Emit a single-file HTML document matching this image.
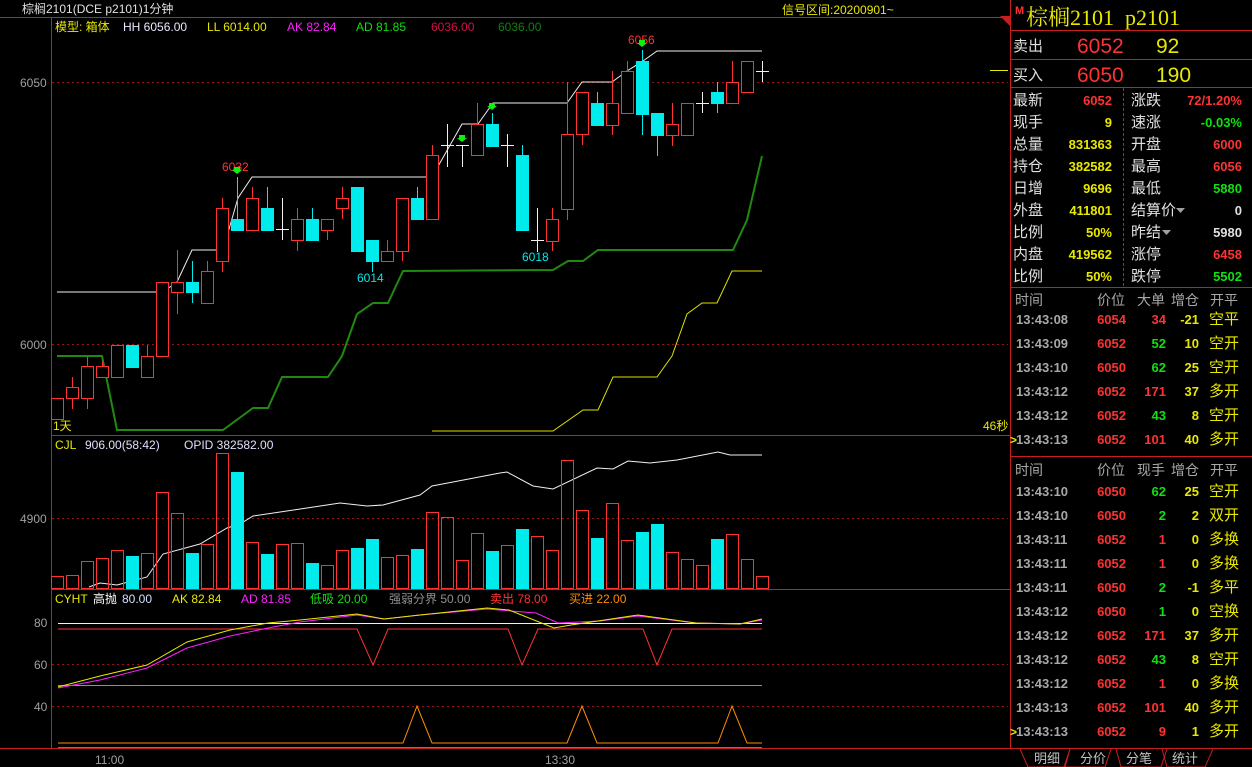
<!DOCTYPE html>
<html><head><meta charset="utf-8"><style>
html,body{margin:0;padding:0;background:#000;width:1252px;height:767px;overflow:hidden}
svg{display:block}
</style></head><body>
<svg id="s" width="1252" height="767" xmlns="http://www.w3.org/2000/svg" font-family="Liberation Sans, Noto Sans CJK SC, sans-serif" font-size="12">
<rect width="1252" height="767" fill="#000"/>
<g stroke="#c81e1e">
<line x1="0" y1="17.5" x2="1010" y2="17.5"/>
<line x1="51.5" y1="17" x2="51.5" y2="749"/>
<line x1="51" y1="435.5" x2="1010" y2="435.5"/>
<line x1="51" y1="589.5" x2="1010" y2="589.5"/>
<line x1="0" y1="748.5" x2="1252" y2="748.5"/>
<line x1="1010.5" y1="0" x2="1010.5" y2="749"/>
</g>
<g stroke="#a01010" stroke-dasharray="2,3">
<line x1="52" y1="82.5" x2="1008" y2="82.5"/>
<line x1="52" y1="344.5" x2="1008" y2="344.5"/>
<line x1="52" y1="518.5" x2="1008" y2="518.5"/>
<line x1="52" y1="664.5" x2="1008" y2="664.5"/>
<line x1="52" y1="706.5" x2="1008" y2="706.5"/>
</g>
<g fill="#a0a0a0" font-size="12">
<text x="20" y="87">6050</text>
<text x="20" y="349">6000</text>
<text x="20" y="523">4900</text>
<text x="34" y="627">80</text>
<text x="34" y="669">60</text>
<text x="34" y="711">40</text>
<text x="95" y="764">11:00</text>
<text x="545" y="764">13:30</text>
</g>
<text x="22" y="13" fill="#e0e0e0">棕榈2101(DCE p2101)1分钟</text>
<text x="782" y="14" fill="#e8e800">信号区间:20200901~</text>
<text x="55" y="31" fill="#e8e800">模型: 箱体</text>
<text x="123" y="31" fill="#e8e8ff">HH 6056.00</text>
<text x="207" y="31" fill="#e8e800">LL 6014.00</text>
<text x="287" y="31" fill="#ff20ff">AK 82.84</text>
<text x="356" y="31" fill="#10e010">AD 81.85</text>
<text x="431" y="31" fill="#d0104a">6036.00</text>
<text x="498" y="31" fill="#108010">6036.00</text>
<text x="53" y="430" fill="#e8e800">1天</text>
<text x="983" y="430" fill="#e8e800">46秒</text>
<line x1="990" y1="70.5" x2="1008" y2="70.5" stroke="#e8e800"/>
<text x="55" y="449" fill="#e8e800">CJL</text>
<text x="85" y="449" fill="#e0e0ff">906.00(58:42)</text>
<text x="184" y="449" fill="#e0e0ff">OPID 382582.00</text>
<text x="55" y="603" fill="#e8e800">CYHT</text>
<text x="93" y="603" fill="#fff">高抛</text><text x="122" y="603" fill="#d0e0ff">80.00</text>
<text x="172" y="603" fill="#e8e800">AK 82.84</text>
<text x="241" y="603" fill="#ff20ff">AD 81.85</text>
<text x="310" y="603" fill="#10e010">低吸 20.00</text>
<text x="389" y="603" fill="#909090">强弱分界 50.00</text>
<text x="490" y="603" fill="#ff3232">卖出 78.00</text>
<text x="569" y="603" fill="#ff8c00">买进 22.00</text>
<polyline fill="none" stroke="#f0f0f0" points="57,292 163,292 177,282 192,250 223,250 238,198 252,177 432,177 462,124 478,124 493,103 567,103 582,82 612,82 627,71 643,61 657,51 762,51"/>
<polyline fill="none" stroke="#208a10" stroke-width="2" points="57,356 102,356 117,430 223,430 253,408 268,408 282,377 328,377 342,356 357,314 373,303 388,303 403,271 553,270 568,261 583,261 598,250 733,250 747,220 762,156"/>
<polyline fill="none" stroke="#e0e000" points="432,431 553,431 583,410 598,410 613,377 657,377 672,356 687,314 702,303 717,303 732,271 762,271"/>
<polyline fill="none" stroke="#f0f0f0" points="89,587 100,583 117,585 147,577 163,554 200,544 227,528 240,524 253,516 307,508 340,503 367,506 383,505 420,495 432,486 453,482 500,473 507,472 533,486 553,489 597,468 613,469 628,461 650,463 677,460 718,452 730,455 762,455"/>
<line x1="58" y1="623.5" x2="762" y2="623.5" stroke="#f0f0f0"/>
<line x1="58" y1="685.5" x2="762" y2="685.5" stroke="#909090"/>
<line x1="58" y1="747.5" x2="762" y2="747.5" stroke="#10c010"/>
<polyline fill="none" stroke="#ff3232" points="58,629 357,629 373,665 388,629 508,629 522,665 538,629 643,629 657,665 672,629 762,629"/>
<polyline fill="none" stroke="#ff8c00" points="58,743 403,743 417,706 432,743 567,743 582,706 597,743 718,743 732,706 747,743 762,743"/>
<polyline fill="none" stroke="#ff20ff" points="58,688 100,680 147,668 187,648 230,636 268,628 300,622 357,615 384,619 420,615 487,609 536,613 558,623 600,621 638,616 696,623 740,624 762,620"/>
<polyline fill="none" stroke="#e8e800" points="58,687 100,676 147,665 187,642 230,630 268,623 300,620 357,614 384,619 420,615 487,608 509,610 554,628 571,625 638,615 696,623 740,624 762,619"/>
<g id="cd"></g>
<text x="222" y="171" fill="#ff3232">6032</text>
<text x="357" y="282" fill="#00e8e8">6014</text>
<text x="522" y="261" fill="#00e8e8">6018</text>
<text x="628" y="44" fill="#ff3232">6056</text>
<g fill="#10f010">
<path d="M234,167h6v3h2l-5,4l-5,-4h2z"/>
<path d="M459,135h6v3h2l-5,4l-5,-4h2z"/>
<path d="M489,103h6v3h2l-5,4l-5,-4h2z"/>
<path d="M639,40h6v3h2l-5,4l-5,-4h2z"/>
</g>
<path d="M1000,16h10v10z" fill="#c81e1e"/>
<text x="1015" y="14" fill="#ff3232" font-size="11" font-weight="bold">M</text>
<text x="1026" y="25" fill="#e8e800" font-size="22" font-family="Liberation Serif, Noto Serif CJK SC, serif">棕榈2101&#160;&#160;p2101</text>
<g stroke="#c81e1e">
<line x1="1010" y1="30.5" x2="1252" y2="30.5"/>
<line x1="1010" y1="59.5" x2="1252" y2="59.5"/>
<line x1="1010" y1="87.5" x2="1252" y2="87.5"/>
<line x1="1010" y1="287.5" x2="1252" y2="287.5"/>
<line x1="1010" y1="456.5" x2="1252" y2="456.5"/>
<line x1="1123.5" y1="88" x2="1123.5" y2="287" stroke-dasharray="3,2"/>
</g>
<text x="1013" y="51" fill="#e0e0e0" font-size="15">卖出</text>
<text x="1077" y="53" fill="#ff3232" font-size="21">6052</text>
<text x="1156" y="53" fill="#e8e800" font-size="21">92</text>
<text x="1013" y="80" fill="#e0e0e0" font-size="15">买入</text>
<text x="1077" y="82" fill="#ff3232" font-size="21">6050</text>
<text x="1156" y="82" fill="#e8e800" font-size="21">190</text>
<g id="rp"></g>
<g fill="none" stroke="#c81e1e">
<path d="M1020,749l8,18h36l6,-18"/>
<path d="M1070,749l-5,18h40l6,-18"/>
<path d="M1116,749l5,18h40l6,-18"/>
<path d="M1162,749l5,18h38l8,-18"/>
</g>
<g fill="#c0c0c0" font-size="13">
<text x="1034" y="763">明细</text>
<text x="1080" y="763">分价</text>
<text x="1126" y="763">分笔</text>
<text x="1172" y="763">统计</text>
</g>
</svg>
<script>
var C=[['r',398,419],['r',387,398,377,409],['r',366,398,357,409],['r',366,377,361,377],['r',345,377],['c',345,367],['r',356,377,345,377],['r',282,356],['r',282,292,250,314],['c',282,292,261,303],['r',271,303,261,303],['r',208,261,198,272],['c',219,230,177,230],['r',198,230,187,230],['c',208,230,187,230],['w',229,198,240],['r',219,240,208,251],['c',219,240,208,240],['r',219,230,219,240],['r',198,208,187,219],['c',187,251],['c',240,261,240,272],['r',251,261,240,261],['r',198,251,198,261],['c',198,219,187,219],['r',155,219,145,219],['w',145,124,167],['w',145,145,167],['r',124,155,103,155],['c',124,146,113,146],['w',145,134,167],['c',155,230,145,230],['w',240,208,252],['r',219,241,208,251],['r',134,209,82,220],['r',92,134,92,145],['c',103,125,92,125],['r',103,125,71,135],['r',71,113,61,113],['c',61,114,50,135],['c',113,135,113,156],['r',124,135,103,146],['r',103,135],['w',103,92,113],['c',92,103,82,113],['r',82,103,61,103],['r',61,92],['w',71,61,82]];
var V=[576,575,561,558,550,556,553,492,513,553,544,453,472,542,554,544,543,563,565,550,548,539,557,555,549,512,517,560,533,551,545,529,536,550,460,510,538,503,540,532,524,552,559,565,539,534,559,576];
var R='#ff3232',Y='#00ecec',h='';
for(var i=0;i<48;i++){var x=57+15*i,c=C[i],t=c[0];
 if(t=='w'){h+='<line x1="'+(x-6)+'" y1="'+(c[1]+.5)+'" x2="'+(x+7)+'" y2="'+(c[1]+.5)+'" stroke="#f0f0f0"/><line x1="'+(x+.5)+'" y1="'+c[2]+'" x2="'+(x+.5)+'" y2="'+c[3]+'" stroke="#f0f0f0"/>';}
 else{var col=t=='r'?R:Y;
  if(c[3]!=null)h+='<line x1="'+(x+.5)+'" y1="'+c[3]+'" x2="'+(x+.5)+'" y2="'+c[4]+'" stroke="'+col+'"/>';
  if(t=='r')h+='<rect x="'+(x-5.5)+'" y="'+(c[1]+.5)+'" width="12" height="'+(c[2]-c[1])+'" fill="#000" stroke="'+R+'"/>';
  else h+='<rect x="'+(x-6)+'" y="'+c[1]+'" width="13" height="'+(c[2]-c[1]+1)+'" fill="'+Y+'"/>';}
 var vt=V[i];
 if(t=='c')h+='<rect x="'+(x-6)+'" y="'+vt+'" width="13" height="'+(589-vt)+'" fill="'+Y+'"/>';
 else h+='<rect x="'+(x-5.5)+'" y="'+(vt+.5)+'" width="12" height="'+(588-vt)+'" fill="none" stroke="'+R+'"/>';
}
document.getElementById('cd').innerHTML=h;
function T(x,y,s,col,anc,sz,fw){return '<text x="'+x+'" y="'+y+'" fill="'+col+'"'+(anc?' text-anchor="end"':'')+' font-size="'+(sz||13)+'"'+(fw?' font-weight="bold"':'')+'>'+s+'</text>';}
var W='#e0e0e0',RD='#ff3232',YL='#e8e800',GR='#10e010',q='';
var S=[['最新','6052',RD,'涨跌','72/1.20%',RD],['现手','9',YL,'速涨','-0.03%',GR],['总量','831363',YL,'开盘','6000',RD],['持仓','382582',YL,'最高','6056',RD],['日增','9696',YL,'最低','5880',GR],['外盘','411801',YL,'结算价','0',W],['比例','50%',YL,'昨结','5980',W],['内盘','419562',YL,'涨停','6458',RD],['比例','50%',YL,'跌停','5502',GR]];
for(var j=0;j<9;j++){var y=105+22*j,s=S[j];
 q+=T(1013,y,s[0],W,0,15)+T(1112,y,s[1],s[2],1,13,1)+T(1131,y,s[3],W,0,15)+T(1242,y,s[4],s[5],1,13,1);}
q+='<path d="M1176,208h9l-4.5,5z" fill="#a0a0a0"/><path d="M1162,230h9l-4.5,5z" fill="#a0a0a0"/>';
var G='#a8a8a8';
function hd(y,c3){return T(1015,y,'时间',G,0,14)+T(1097,y,'价位',G,0,14)+T(1137,y,c3,G,0,14)+T(1171,y,'增仓',G,0,14)+T(1210,y,'开平',G,0,14);}
q+=hd(305,'大单');q+=hd(475,'现手');
var A=[['13:43:08','6054','34',RD,'-21','空平'],['13:43:09','6052','52',GR,'10','空开'],['13:43:10','6050','62',GR,'25','空开'],['13:43:12','6052','171',RD,'37','多开'],['13:43:12','6052','43',GR,'8','空开'],['13:43:13','6052','101',RD,'40','多开']];
var B=[['13:43:10','6050','62',GR,'25','空开'],['13:43:10','6050','2',GR,'2','双开'],['13:43:11','6052','1',RD,'0','多换'],['13:43:11','6052','1',RD,'0','多换'],['13:43:11','6050','2',GR,'-1','多平'],['13:43:12','6050','1',GR,'0','空换'],['13:43:12','6052','171',RD,'37','多开'],['13:43:12','6052','43',GR,'8','空开'],['13:43:12','6052','1',RD,'0','多换'],['13:43:13','6052','101',RD,'40','多开'],['13:43:13','6052','9',RD,'1','多开']];
function row(y,r){return T(1016,y,r[0],G,0,13,1)+T(1126,y,r[1],RD,1,13,1)+T(1166,y,r[2],r[3],1,13,1)+T(1199,y,r[4],YL,1,13,1)+T(1209,y,r[5],YL,0,15);}
for(j=0;j<6;j++)q+=row(324+24*j,A[j]);
for(j=0;j<11;j++)q+=row(496+24*j,B[j]);
q+=T(1010,444,'&gt;',YL,0,12,1)+T(1010,736,'&gt;',YL,0,12,1);
document.getElementById('rp').innerHTML=q;
</script>
</body></html>
